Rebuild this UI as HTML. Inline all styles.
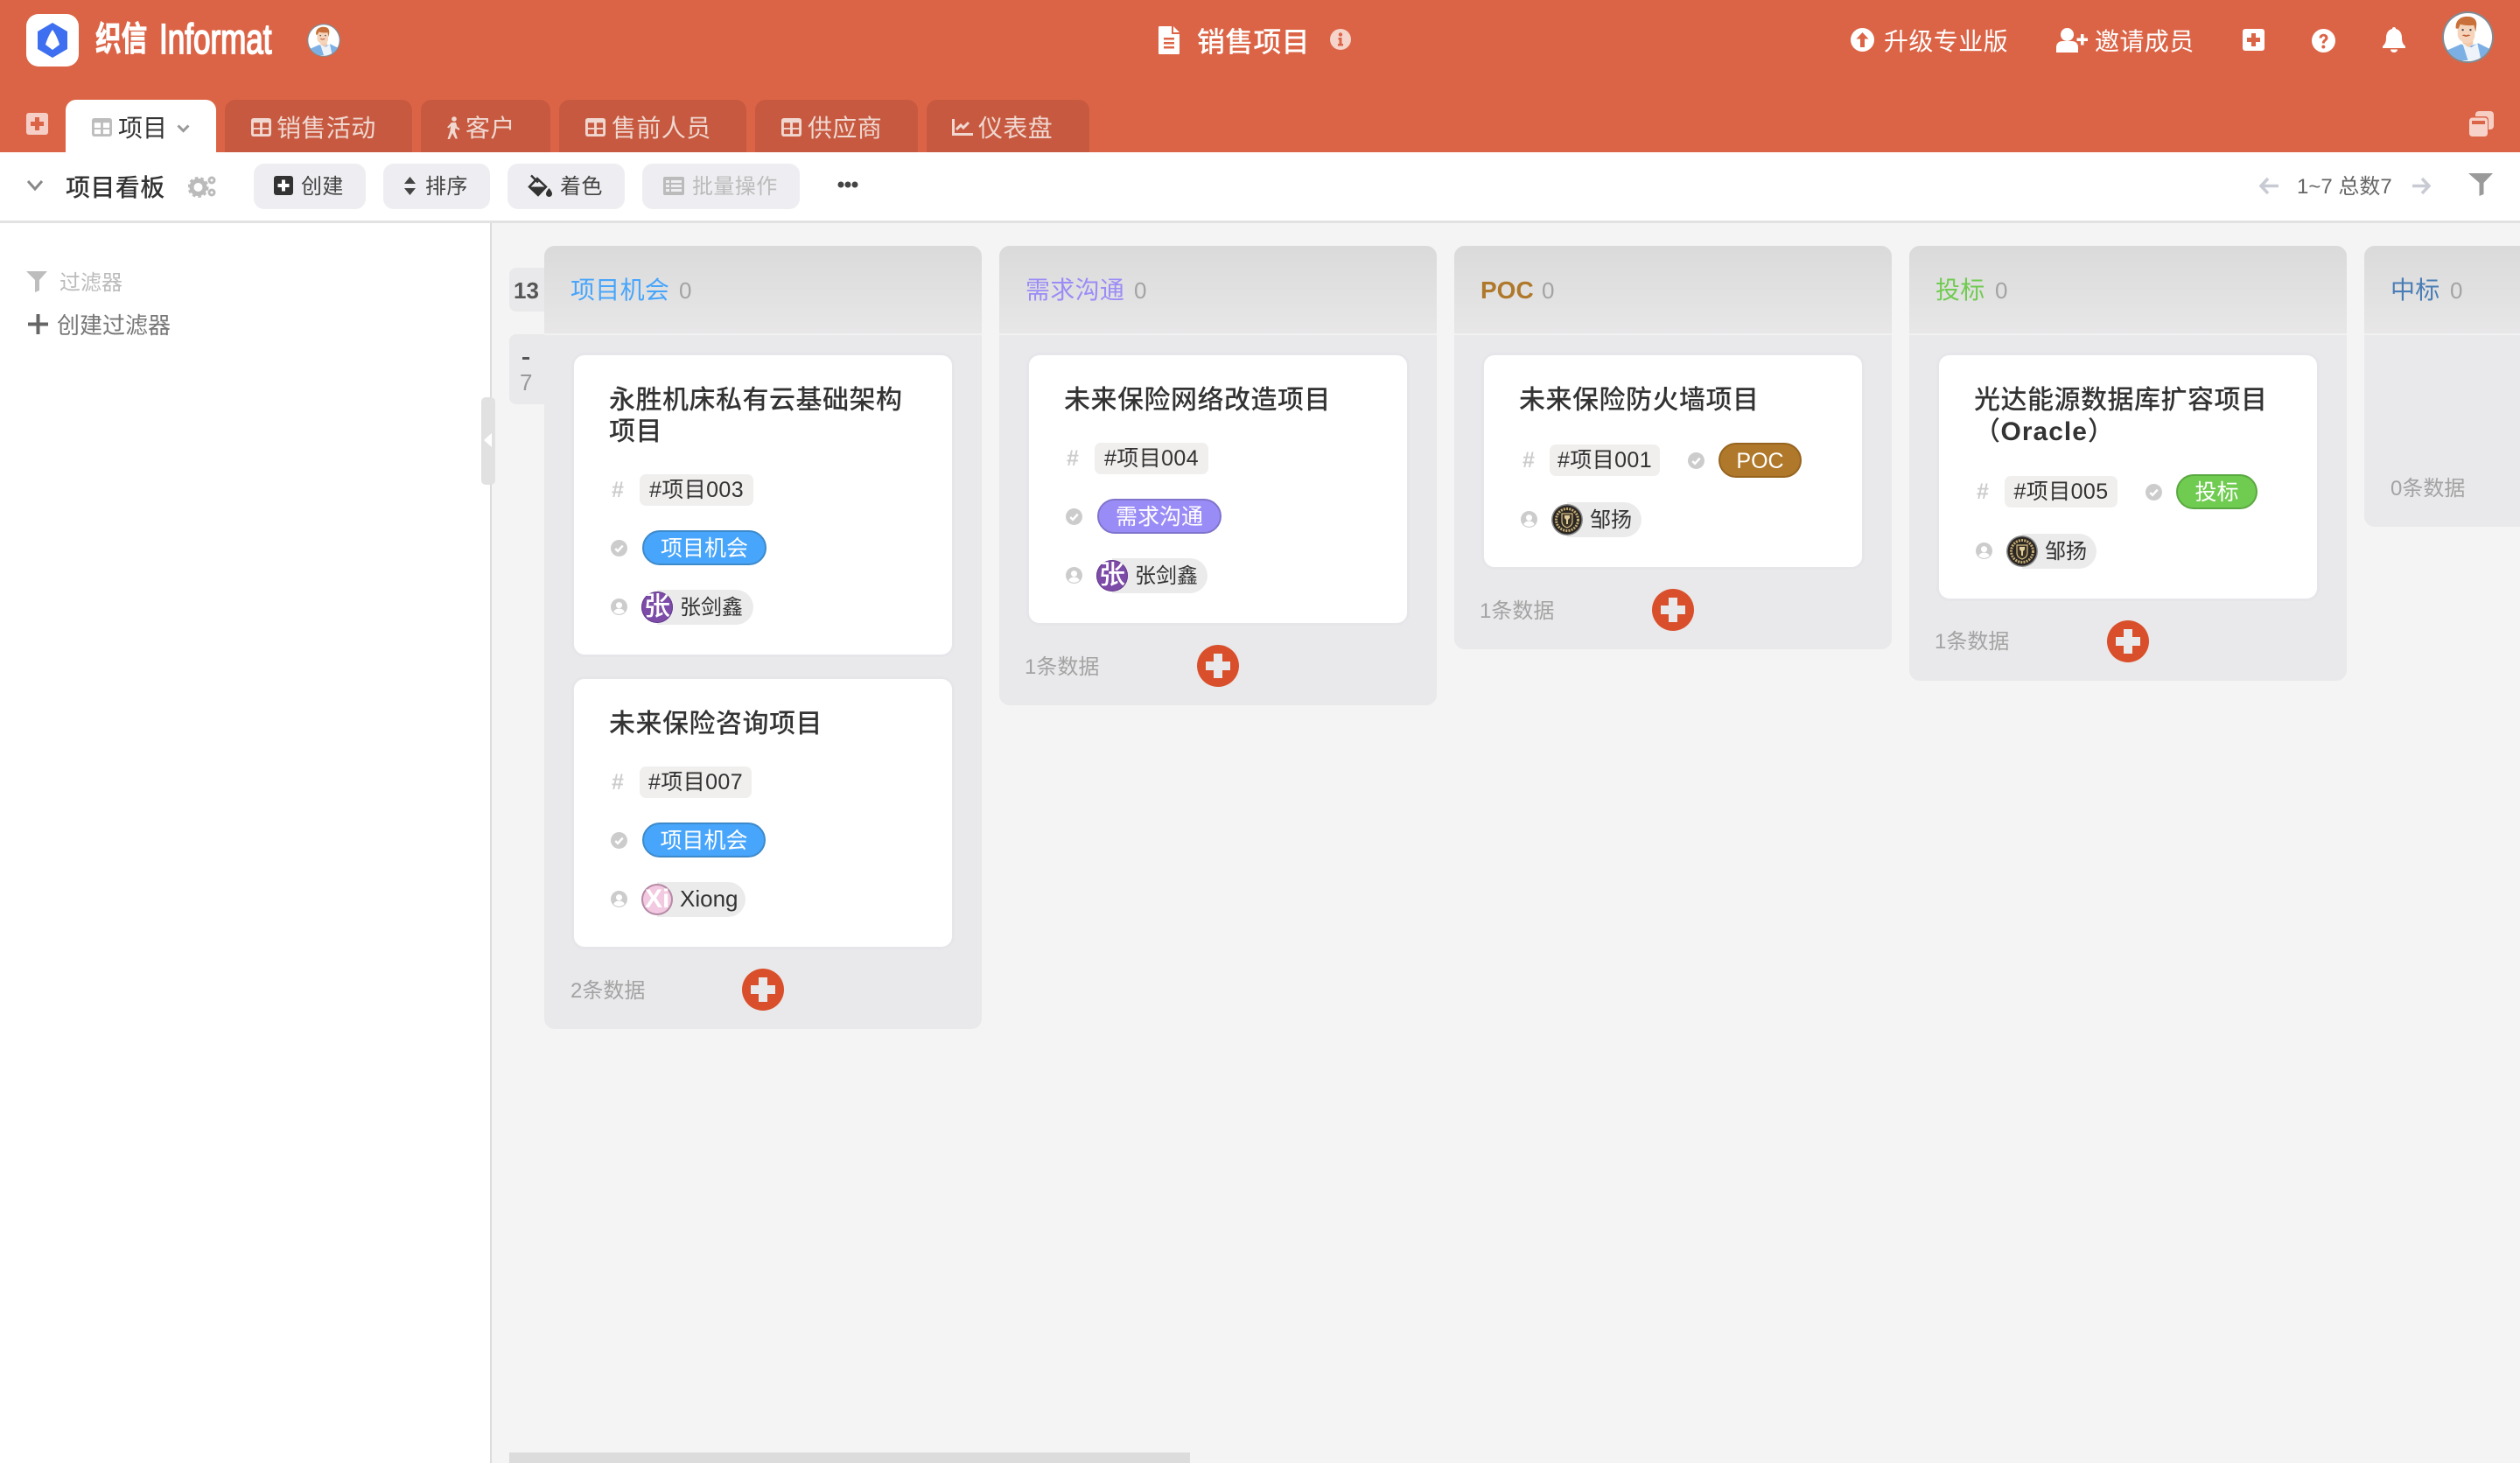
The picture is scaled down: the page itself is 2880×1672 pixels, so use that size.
<!DOCTYPE html>
<html lang="zh"><head><meta charset="utf-8"><title>销售项目</title>
<style>
html,body{margin:0;padding:0;width:2880px;height:1672px;overflow:hidden;background:#f4f4f4;font-family:"Liberation Sans","Noto Sans CJK SC",sans-serif;color:#333}
.a,.t,svg.a{position:absolute;display:block}
.t{white-space:nowrap;line-height:40px;font-size:24px;margin-top:2px}
.tab{position:absolute;top:114px;height:60px;background:#c6593f;border-radius:12px 12px 0 0}
.tt{color:#f0d8d1;font-size:28px;top:125px;margin-left:0;letter-spacing:.4px}
.btn{position:absolute;top:187px;height:52px;background:#eeeef2;border-radius:12px}
.col{position:absolute;top:281px;width:500px;background:#e9e8ea;border-radius:12px}
.hd{position:absolute;left:0;top:0;width:100%;height:100px;border-radius:12px 12px 0 0;background:linear-gradient(#dadada,#e8e7e8);border-bottom:2px solid #f1f1f2}
.lab{font-size:28px;top:310px;letter-spacing:.3px}
.cnt{font-size:26px;top:310px;color:#a3a3a3}
.card{position:absolute;width:432px;background:#fff;border-radius:12px;box-shadow:0 0 0 3px #e6e6ea}
.ti{position:absolute;font-size:30px;line-height:36px;font-weight:500;letter-spacing:.5px;color:#333;white-space:nowrap;margin-top:3px}
.tag{position:absolute;height:36px;line-height:36px;font-size:25px;letter-spacing:.4px;text-align:center;background:#f0efee;border-radius:7px;color:#333;white-space:nowrap}
.st{position:absolute;height:40px;box-sizing:border-box;border-width:2px;border-style:solid;border-radius:20px;color:#fff;font-size:25px;line-height:38px;text-align:center;white-space:nowrap}
.blue{background:#47a5fb;border-color:#3d8acb}.pur{background:#9a8cf6;border-color:#7f74cc}.br{background:#af782a;border-color:#96641f}.gr{background:#70cb51;border-color:#5aa841}
.pp{position:absolute;height:40px;background:#ebebeb;border-radius:0 20px 20px 0}
.av{position:absolute;width:36px;height:36px;border-radius:50%;background:#7d4ba8;color:#fff;font-size:30px;font-weight:500;line-height:35px;text-align:center;overflow:hidden;box-shadow:inset 0 0 0 1px #663c8d}
.nm{position:absolute;font-size:24px;line-height:40px;color:#333;white-space:nowrap;margin-top:1px}
.hs{position:absolute;font-size:25px;line-height:30px;color:#ccc;font-weight:700;width:18px;text-align:center}
.add{position:absolute;width:48px;height:48px;border-radius:50%;background:linear-gradient(#e9e8ea,#e9e8ea) center/28px 10px no-repeat,linear-gradient(#e9e8ea,#e9e8ea) center/10px 28px no-repeat,#d94f2b}
.ft{position:absolute;font-size:24px;line-height:40px;color:#a3a3a3;white-space:nowrap;margin:2px 0 0 0}
.ic{position:absolute;width:19px;height:19px}
</style></head><body>
<svg width="0" height="0" style="position:absolute">
<symbol id="tbl" viewBox="0 0 24 24"><path fill="currentColor" fill-rule="evenodd" d="M3 1h18a3 3 0 0 1 3 3v16a3 3 0 0 1-3 3H3a3 3 0 0 1-3-3V4a3 3 0 0 1 3-3zM3 6.500v6h7.500v-6zM13.500 6.500v6H21v-6zM3 14.500v5.500h7.500v-5.500zM13.500 14.500v5.500H21v-5.500z"/></symbol>
<symbol id="chk" viewBox="0 0 20 20"><circle cx="10" cy="10" r="10" fill="#ccc"/><path d="M5.500 10.500l3 3 6-6.500" fill="none" stroke="#fff" stroke-width="2.600"/></symbol>
<symbol id="usr" viewBox="0 0 20 20"><circle cx="10" cy="10" r="10" fill="#ccc"/><circle cx="10" cy="8" r="3.700" fill="#fff"/><path d="M3.500 16c1-3 4-3.800 6.500-3.800s5.500.8 6.500 3.800a9 9 0 0 1-13 0z" fill="#fff"/></symbol>
<symbol id="man" viewBox="0 0 60 60"><circle cx="30" cy="30" r="30" fill="#7f8b95"/><circle cx="30" cy="30" r="28" fill="#fff"/><clipPath id="cc"><circle cx="30" cy="30" r="28"/></clipPath><g clip-path="url(#cc)"><path d="M4 46l18-8 8 3 12-4 16 8v12H4z" fill="#7cb0e5"/><path d="M24 38l10 4 7-5 5 23H31z" fill="#eef3fa"/><path d="M24 28h12v10l-5 4-7-5z" fill="#f3c9a9"/><path d="M18 14h20v14c0 6-5 9-9 9s-11-4-11-10z" fill="#f5d4bb"/><path d="M16 20c-1-9 5-14 13-14 7 0 11 3 11 9l-1 9-2-8c-6 1-12 0-16-1l-2 5z" fill="#c9703a"/><path d="M23 28c2-1.500 4-1 5 0 1-1 3-1.500 5 0l-5 1.500z" fill="#c05a33"/><circle cx="24" cy="21.500" r="1.200" fill="#444"/><circle cx="33" cy="21.500" r="1.200" fill="#444"/></g></symbol>
<symbol id="mu" viewBox="0 0 36 36"><circle cx="18" cy="18" r="18" fill="#8a8a8c"/><circle cx="18" cy="18" r="16.500" fill="#2a2622"/><circle cx="18" cy="18" r="12.500" fill="none" stroke="#c4ab74" stroke-width="3" stroke-dasharray="2 1.200"/><path d="M12 11h12v9c0 4-3 6-6 7-3-1-6-3-6-7z" fill="#3b3226" stroke="#d4bc84" stroke-width="1.200"/><path d="M15 13h6v3l-2 2v5h-2v-5l-2-2z" fill="#e2cf9d"/></symbol>
</svg>

<!-- header -->
<div class="a" style="left:0;top:0;width:2880px;height:174px;background:#dc6446"></div>
<div class="a" style="left:30px;top:16px;width:60px;height:60px;background:#fff;border-radius:14px"></div>
<svg class="a" style="left:43px;top:26px" width="34" height="40" viewBox="0 0 34 40"><path d="M17 0l17 10v20L17 40 0 30V10z" fill="#3d6ff0"/><path d="M17 8c3 4 6 10 8 17l-8 6-8-6c2-7 5-13 8-17z" fill="#fff"/></svg>
<div class="t" style="left:109px;top:24px;margin:0;font-size:39px;line-height:44px;font-weight:700;color:#fff;transform:scaleX(.76);transform-origin:0 50%;-webkit-text-stroke:.8px #fff">织信</div>
<div class="t" style="left:182px;top:20px;margin:0;font-size:48px;line-height:52px;color:#fff;-webkit-text-stroke:1.800px #fff;transform:scaleX(.73);transform-origin:0 50%">Informat</div>
<svg class="a" style="left:351px;top:27px" width="38" height="38"><use href="#man"/></svg>

<svg class="a" style="left:1324px;top:30px" width="24" height="32" viewBox="0 0 24 32"><path fill="#fff" fill-rule="evenodd" d="M1 0h14v9h9v22a1 1 0 0 1-1 1H1a1 1 0 0 1-1-1V1a1 1 0 0 1 1-1zM17 0l7 7h-7zM6 13v2.500h12V13zM6 18v2.500h12V18zM6 23v2.500h12V23z"/></svg>
<div class="t" style="left:1368px;top:26px;font-size:32px;color:#fff;font-weight:500;letter-spacing:.2px">销售项目</div>
<svg class="a" style="left:1520px;top:33px" width="24" height="24" viewBox="0 0 24 24"><circle cx="12" cy="12" r="12" fill="#f5d4cb"/><circle cx="12" cy="6.500" r="2.200" fill="#dc6446"/><path d="M9.500 10h4v7h1.500v2.500H9v-2.500h1.500v-4.500h-1z" fill="#dc6446"/></svg>

<svg class="a" style="left:2115px;top:32px" width="27" height="27" viewBox="0 0 27 27"><circle cx="13.500" cy="13.500" r="13.500" fill="#fff"/><path d="M13.500 5l7 7.500h-4.500V22h-5v-9.500H6.500z" fill="#dc6446"/></svg>
<div class="t" style="left:2153px;top:26px;font-size:28px;color:#fff;letter-spacing:.4px">升级专业版</div>
<svg class="a" style="left:2350px;top:32px" width="36" height="28" viewBox="0 0 36 28"><circle cx="12.500" cy="7.500" r="7.500" fill="#fff"/><path d="M0 28v-6c0-5 4-7 7-7h11c3 0 7 2 7 7v6z" fill="#fff"/><path d="M28 7h3.500v4.500H36V15h-4.500v4.500H28V15h-4.500v-3.500H28z" fill="#fff"/></svg>
<div class="t" style="left:2394px;top:26px;font-size:28px;color:#fff;letter-spacing:.4px">邀请成员</div>
<svg class="a" style="left:2563px;top:33px" width="25" height="25" viewBox="0 0 25 25"><rect width="25" height="25" rx="3" fill="#fff"/><path d="M10 5h5v5h5v5h-5v5h-5v-5H5v-5h5z" fill="#dc6446"/></svg>
<svg class="a" style="left:2642px;top:33px" width="27" height="27" viewBox="0 0 27 27"><circle cx="13.500" cy="13.500" r="13.500" fill="#fff"/><path d="M8.500 10.500c0-3 2.300-4.800 5-4.800s5 1.800 5 4.500c0 3.500-3.700 3.500-3.700 6.300h-3c0-4.300 3.500-4.300 3.500-6.300 0-1-.8-1.700-1.800-1.700s-1.900.8-1.900 2z" fill="#dc6446"/><circle cx="13.300" cy="20.500" r="2" fill="#dc6446"/></svg>
<svg class="a" style="left:2723px;top:31px" width="26" height="29" viewBox="0 0 26 29"><path d="M13 0c1.300 0 2 .8 2 2 4.500 1 7 5 7 10 0 5 1 7 4 10v2H0v-2c3-3 4-5 4-10 0-5 2.500-9 7-10 0-1.200.7-2 2-2z" fill="#fff"/><path d="M9 25.500h8c0 2-1.800 3.500-4 3.500s-4-1.500-4-3.500z" fill="#fff"/></svg>
<svg class="a" style="left:2791px;top:13px" width="59" height="59"><use href="#man"/></svg>

<!-- tabs -->
<svg class="a" style="left:30px;top:129px" width="25" height="25" viewBox="0 0 25 25"><rect width="25" height="25" rx="3" fill="#f5cfc6"/><path d="M10 5h5v5h5v5h-5v5h-5v-5H5v-5h5z" fill="#dc6446"/></svg>
<div class="tab" style="left:75px;width:172px;background:#fff"></div>
<svg class="a" style="left:105px;top:134px;color:#bdbdbd" width="23" height="23"><use href="#tbl"/></svg>
<div class="t" style="left:135px;top:125px;font-size:28px;color:#333">项目</div>
<svg class="a" style="left:202px;top:142px" width="15" height="10" viewBox="0 0 15 10"><path d="M1.500 1.500l6 6 6-6" fill="none" stroke="#999" stroke-width="3"/></svg>

<div class="tab" style="left:257px;width:214px"></div>
<svg class="a" style="left:287px;top:134px;color:#f0d8d1" width="23" height="23"><use href="#tbl"/></svg>
<div class="t tt" style="left:316px">销售活动</div>

<div class="tab" style="left:481px;width:148px"></div>
<svg class="a" style="left:511px;top:133px" width="15" height="26" viewBox="0 0 15 26"><circle cx="8" cy="3" r="2.800" fill="#f0d8d1"/><path d="M5 7h5l1.500 5 3 2-1 2-4-2.500-.5 3.500 3 8.500h-2.500L6 19l-3 7H.5l3-9.500.5-5.500L2 13.500 0 12.500z" fill="#f0d8d1"/></svg>
<div class="t tt" style="left:532px">客户</div>

<div class="tab" style="left:639px;width:214px"></div>
<svg class="a" style="left:669px;top:134px;color:#f0d8d1" width="23" height="23"><use href="#tbl"/></svg>
<div class="t tt" style="left:699px">售前人员</div>

<div class="tab" style="left:863px;width:186px"></div>
<svg class="a" style="left:893px;top:134px;color:#f0d8d1" width="23" height="23"><use href="#tbl"/></svg>
<div class="t tt" style="left:923px">供应商</div>

<div class="tab" style="left:1059px;width:186px"></div>
<svg class="a" style="left:1088px;top:136px" width="24" height="19" viewBox="0 0 24 19"><path d="M1.500 0v17.500H24" fill="none" stroke="#f0d8d1" stroke-width="3"/><path d="M5 12l5-5 3 3 6-6" fill="none" stroke="#f0d8d1" stroke-width="3"/></svg>
<div class="t tt" style="left:1118px">仪表盘</div>

<svg class="a" style="left:2822px;top:127px" width="28" height="29" viewBox="0 0 28 29"><rect x="7" y="0" width="21" height="21" rx="4" fill="#f9d9d1" opacity=".9"/><rect x="0" y="6" width="22" height="23" rx="4" fill="#dc6446"/><rect x="0" y="7.500" width="21" height="21.500" rx="3.500" fill="#f7d2c9"/><rect x="3" y="11" width="15" height="4" fill="#dc6446"/></svg>

<!-- toolbar -->
<div class="a" style="left:0;top:174px;width:2880px;height:78px;background:#fff"></div>
<div class="a" style="left:0;top:252px;width:2880px;height:3px;background:#e2e2e2"></div>
<svg class="a" style="left:30px;top:205px" width="20" height="14" viewBox="0 0 20 14"><path d="M2 2l8 9 8-9" fill="none" stroke="#888" stroke-width="3"/></svg>
<div class="t" style="left:75px;top:193px;font-size:28px;color:#333;font-weight:500;letter-spacing:.4px">项目看板</div>
<svg class="a" style="left:215px;top:200px" width="33" height="26" viewBox="0 0 33 26"><circle cx="11.500" cy="14" r="7.500" fill="none" stroke="#bbb" stroke-width="5"/><circle cx="11.500" cy="14" r="10.500" fill="none" stroke="#bbb" stroke-width="3" stroke-dasharray="3.500 3"/><circle cx="27" cy="6" r="3" fill="none" stroke="#bbb" stroke-width="3"/><circle cx="27" cy="20" r="3" fill="none" stroke="#bbb" stroke-width="3"/></svg>

<div class="btn" style="left:290px;width:128px"></div>
<svg class="a" style="left:313px;top:201px" width="22" height="22" viewBox="0 0 22 22"><rect width="22" height="22" rx="3" fill="#333"/><path d="M9 4.500h4V9h4.500v4H13v4.500H9V13H4.500V9H9z" fill="#fff"/></svg>
<div class="t" style="left:344px;top:192px;color:#444;letter-spacing:.4px">创建</div>
<div class="btn" style="left:438px;width:122px"></div>
<svg class="a" style="left:462px;top:202px" width="13" height="21" viewBox="0 0 13 21"><path d="M6.500 0L13 8H0zM0 13h13l-6.500 8z" fill="#444"/></svg>
<div class="t" style="left:486px;top:192px;color:#444;letter-spacing:.4px">排序</div>
<div class="btn" style="left:580px;width:134px"></div>
<svg class="a" style="left:603px;top:199px" width="28" height="26" viewBox="0 0 28 26"><path d="M11 5l10 9.500L12 24 2 14.500z" fill="none" stroke="#333" stroke-width="2.500"/><path d="M2 14.500h19.500L12 24z" fill="#333"/><path d="M4 1.500l8 8" stroke="#333" stroke-width="2.500"/><path d="M24.500 16c2 2.500 3.500 4.500 3.500 6.500a3.500 3.500 0 0 1-7 0c0-2 1.500-4 3.500-6.500z" fill="#333"/></svg>
<div class="t" style="left:640px;top:192px;color:#444;letter-spacing:.4px">着色</div>
<div class="btn" style="left:734px;width:180px"></div>
<svg class="a" style="left:758px;top:202px" width="24" height="21" viewBox="0 0 24 21"><path fill="#bbb" fill-rule="evenodd" d="M2 0h20a2 2 0 0 1 2 2v17a2 2 0 0 1-2 2H2a2 2 0 0 1-2-2V2a2 2 0 0 1 2-2zM3 4v3h4V4zM9 4v3h12V4zM3 9v3h4V9zM9 9v3h12V9zM3 14v3h4v-3zM9 14v3h12v-3z"/></svg>
<div class="t" style="left:791px;top:192px;color:#bbb;letter-spacing:.4px">批量操作</div>
<svg class="a" style="left:957px;top:207px" width="24" height="8" viewBox="0 0 24 8"><circle cx="4" cy="4" r="3.500" fill="#444"/><circle cx="12" cy="4" r="3.500" fill="#444"/><circle cx="20" cy="4" r="3.500" fill="#444"/></svg>

<svg class="a" style="left:2581px;top:202px" width="23" height="21" viewBox="0 0 23 21"><path d="M11 2L3 10.500 11 19M3 10.500h20" fill="none" stroke="#c8cbd3" stroke-width="3.500"/></svg>
<div class="t" style="left:2625px;top:192px;color:#666">1~7 总数7</div>
<svg class="a" style="left:2757px;top:202px" width="22" height="21" viewBox="0 0 22 21"><path d="M11 2l8 8.500L11 19M0 10.500h19" fill="none" stroke="#c8cbd3" stroke-width="3.500"/></svg>
<svg class="a" style="left:2821px;top:198px" width="28" height="26" viewBox="0 0 28 26"><path d="M0 0h28L17.500 11v13l-5 2V11z" fill="#9a9a9a"/></svg>

<!-- sidebar -->
<div class="a" style="left:0;top:255px;width:560px;height:1417px;background:#fff"></div>
<div class="a" style="left:560px;top:255px;width:2px;height:1417px;background:#dcdcdc"></div>
<svg class="a" style="left:30px;top:310px" width="24" height="24" viewBox="0 0 24 24"><path d="M0 0h24L15 10v12l-5 2V10z" fill="#bdbdbd"/></svg>
<div class="t" style="left:68px;top:302px;color:#bbb">过滤器</div>
<svg class="a" style="left:32px;top:359px" width="23" height="23" viewBox="0 0 23 23"><path d="M9.500 0h4v9.500H23v4h-9.500V23h-4v-9.500H0v-4h9.500z" fill="#666"/></svg>
<div class="t" style="left:65px;top:350px;font-size:26px;color:#777">创建过滤器</div>

<!-- collapse handle -->
<div class="a" style="left:550px;top:454px;width:16px;height:100px;background:#e1e1e1;border-radius:5px"></div>
<svg class="a" style="left:553px;top:495px" width="9" height="16" viewBox="0 0 9 16"><path d="M9 0v16L0 8z" fill="#fff"/></svg>

<!-- row labels -->
<div class="a" style="left:582px;top:306px;width:44px;height:50px;background:#e9e8ea;border-radius:8px 0 0 8px"></div>
<div class="t" style="left:587px;top:310px;font-size:26px;font-weight:700;color:#555">13</div>
<div class="a" style="left:582px;top:382px;width:44px;height:80px;background:#e9e8ea;border-radius:8px 0 0 8px"></div>
<div class="a" style="left:597px;top:408px;width:8px;height:3px;background:#555"></div>
<div class="t" style="left:594px;top:415px;font-size:26px;color:#999">7</div>

<!-- column 1 -->
<div class="col" style="left:622px;height:895px"><div class="hd"></div></div>
<div class="t lab" style="left:652px;color:#47a5fb">项目机会</div><div class="t cnt" style="left:776px">0</div>
<div class="card" style="left:656px;top:406px;height:342px"></div>
<div class="ti" style="left:696px;top:437px">永胜机床私有云基础架构<br>项目</div>
<div class="hs" style="left:697px;top:545px">#</div>
<div class="tag" style="left:731px;top:542px;width:130px">#项目003</div>
<svg class="ic" style="left:698px;top:617px"><use href="#chk"/></svg>
<div class="st blue" style="left:734px;top:606px;width:142px">项目机会</div>
<svg class="ic" style="left:698px;top:684px"><use href="#usr"/></svg>
<div class="pp" style="left:751px;top:674px;width:110px"></div>
<div class="av" style="left:733px;top:676px">张</div>
<div class="nm" style="left:777px;top:674px">张剑鑫</div>

<div class="card" style="left:656px;top:776px;height:306px"></div>
<div class="ti" style="left:696px;top:807px">未来保险咨询项目</div>
<div class="hs" style="left:697px;top:879px">#</div>
<div class="tag" style="left:731px;top:876px;width:128px">#项目007</div>
<svg class="ic" style="left:698px;top:951px"><use href="#chk"/></svg>
<div class="st blue" style="left:734px;top:940px;width:141px">项目机会</div>
<svg class="ic" style="left:698px;top:1018px"><use href="#usr"/></svg>
<div class="pp" style="left:751px;top:1008px;width:101px"></div>
<div class="av" style="left:733px;top:1010px;background:#f2c9e0;box-shadow:inset 0 0 0 2px #b58aa6;font-size:30px;font-weight:700;text-align:left;text-indent:4px;white-space:nowrap">Xi</div>
<div class="nm" style="left:777px;top:1006px;font-size:26px">Xiong</div>
<div class="ft" style="left:652px;top:1111px">2条数据</div>
<div class="add" style="left:848px;top:1107px"></div>

<!-- column 2 -->
<div class="col" style="left:1142px;height:525px"><div class="hd"></div></div>
<div class="t lab" style="left:1172px;color:#9a8cf6">需求沟通</div><div class="t cnt" style="left:1296px">0</div>
<div class="card" style="left:1176px;top:406px;height:306px"></div>
<div class="ti" style="left:1216px;top:437px">未来保险网络改造项目</div>
<div class="hs" style="left:1217px;top:509px">#</div>
<div class="tag" style="left:1251px;top:506px;width:130px">#项目004</div>
<svg class="ic" style="left:1218px;top:581px"><use href="#chk"/></svg>
<div class="st pur" style="left:1254px;top:570px;width:142px">需求沟通</div>
<svg class="ic" style="left:1218px;top:648px"><use href="#usr"/></svg>
<div class="pp" style="left:1271px;top:638px;width:109px"></div>
<div class="av" style="left:1253px;top:640px">张</div>
<div class="nm" style="left:1297px;top:638px">张剑鑫</div>
<div class="ft" style="left:1171px;top:741px">1条数据</div>
<div class="add" style="left:1368px;top:737px"></div>

<!-- column 3 -->
<div class="col" style="left:1662px;height:461px"><div class="hd"></div></div>
<div class="t lab" style="left:1692px;color:#af782a;font-weight:700;letter-spacing:0">POC</div><div class="t cnt" style="left:1762px">0</div>
<div class="card" style="left:1696px;top:406px;height:242px"></div>
<div class="ti" style="left:1736px;top:437px">未来保险防火墙项目</div>
<div class="hs" style="left:1738px;top:511px">#</div>
<div class="tag" style="left:1771px;top:508px;width:126px">#项目001</div>
<svg class="ic" style="left:1929px;top:517px"><use href="#chk"/></svg>
<div class="st br" style="left:1964px;top:506px;width:95px">POC</div>
<svg class="ic" style="left:1738px;top:584px"><use href="#usr"/></svg>
<div class="pp" style="left:1791px;top:574px;width:85px"></div>
<svg class="a" style="left:1773px;top:576px" width="36" height="36"><use href="#mu"/></svg>
<div class="nm" style="left:1817px;top:574px">邹扬</div>
<div class="ft" style="left:1691px;top:677px">1条数据</div>
<div class="add" style="left:1888px;top:673px"></div>

<!-- column 4 -->
<div class="col" style="left:2182px;height:497px"><div class="hd"></div></div>
<div class="t lab" style="left:2212px;color:#70cb51">投标</div><div class="t cnt" style="left:2280px">0</div>
<div class="card" style="left:2216px;top:406px;height:278px"></div>
<div class="ti" style="left:2256px;top:437px">光达能源数据库扩容项目<br>（<b style="font-weight:700;letter-spacing:1px">Oracle</b>）</div>
<div class="hs" style="left:2257px;top:547px">#</div>
<div class="tag" style="left:2291px;top:544px;width:129px">#项目005</div>
<svg class="ic" style="left:2452px;top:553px"><use href="#chk"/></svg>
<div class="st gr" style="left:2487px;top:542px;width:93px">投标</div>
<svg class="ic" style="left:2258px;top:620px"><use href="#usr"/></svg>
<div class="pp" style="left:2311px;top:610px;width:85px"></div>
<svg class="a" style="left:2293px;top:612px" width="36" height="36"><use href="#mu"/></svg>
<div class="nm" style="left:2337px;top:610px">邹扬</div>
<div class="ft" style="left:2211px;top:712px">1条数据</div>
<div class="add" style="left:2408px;top:709px"></div>

<!-- column 5 -->
<div class="col" style="left:2702px;height:321px"><div class="hd"></div></div>
<div class="t lab" style="left:2732px;color:#4a7db5">中标</div><div class="t cnt" style="left:2800px">0</div>
<div class="ft" style="left:2732px;top:537px">0条数据</div>

<!-- scrollbar -->
<div class="a" style="left:582px;top:1660px;width:778px;height:12px;background:#dcdcdc"></div>
</body></html>
